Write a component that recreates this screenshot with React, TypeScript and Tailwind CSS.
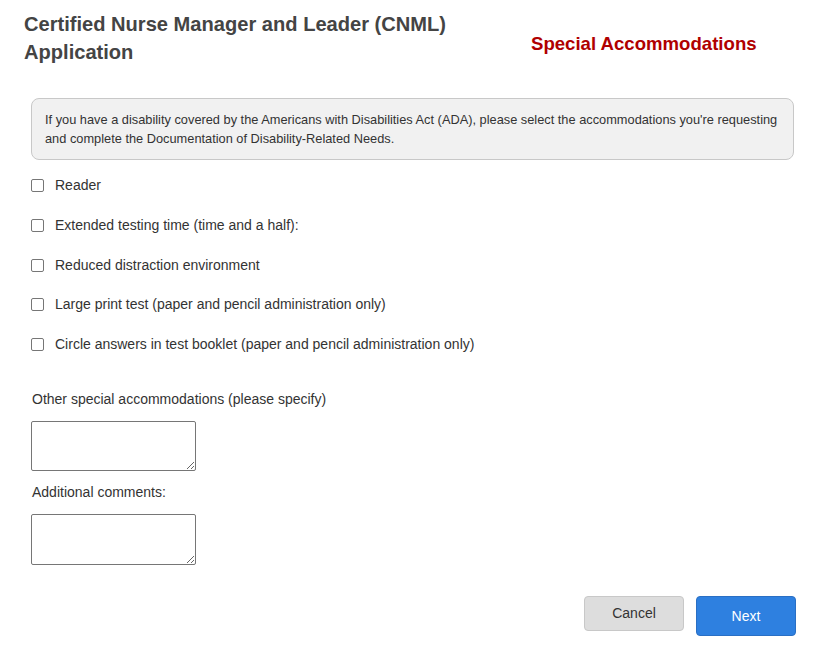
const options = [
  "Reader",
  "Extended testing time (time and a half):",
  "Reduced distraction environment",
  "Large print test (paper and pencil administration only)",
  "Circle answers in test booklet (paper and pencil administration only)",
];

export default function App() {
  return (
    <div className="min-h-screen bg-white font-['Liberation_Sans',Arial,sans-serif] text-[#333]">
      {/* ── Header ── */}
      <div className="flex items-start pl-6 pt-[10px]">
        <h1 className="w-[500px] text-[20.1px] font-bold leading-[28px] text-[#444]">
          Certified Nurse Manager and Leader (CNML)
          <br />
          Application
        </h1>
        <h2 className="ml-[7px] mt-[23px] text-[18.6px] font-bold leading-[22px] text-[#b00000]">
          Special Accommodations
        </h2>
      </div>

      <div className="pl-[31px] pr-[36px]">
        {/* ── Notice ── */}
        <div className="mt-[32px] h-[62px] rounded-lg border border-[#c8c8c8] bg-[#f1f1f1] px-[13px] pt-[11px] text-[12.8px] leading-[19px] text-[#333]">
          If you have a disability covered by the Americans with Disabilities Act (ADA), please select the accommodations you're requesting
          <br />
          and complete the Documentation of Disability-Related Needs.
        </div>

        {/* ── Options ── */}
        <div className="mt-[17px] flex flex-col gap-[22.75px]">
          {options.map((o, i) => (
            <label key={i} className="flex h-[17px] items-center text-[14px]">
              <input
                type="checkbox"
                className="m-0 h-[13px] w-[13px] appearance-none rounded-[2px] border border-[#767676] bg-white"
              />
              <span className="ml-[11px] text-[#333]">{o}</span>
            </label>
          ))}
        </div>

        {/* ── Text areas ── */}
        <p className="ml-px mt-[38px] text-[14px] leading-[17px]">Other special accommodations (please specify)</p>
        <textarea className="mt-[13px] block h-[50px] w-[165px] rounded-[2px] border border-[#767676]" />
        <p className="ml-px mt-[13px] text-[14px] leading-[17px]">Additional comments:</p>
        <textarea className="mt-[13px] block h-[51px] w-[165px] rounded-[2px] border border-[#767676]" />

        {/* ── Buttons ── */}
        <div className="mt-[31px] flex items-start justify-end gap-3">
          <button className="h-[35px] w-[100px] rounded border border-[#c8c8c8] bg-[#dddddd] text-[14px] text-[#333]">
            Cancel
          </button>
          <button className="mr-[-2px] h-[40px] w-[100px] rounded border border-[#2a6fc4] bg-[#2e80e0] text-[14px] text-white">
            Next
          </button>
        </div>
      </div>
    </div>
  );
}
